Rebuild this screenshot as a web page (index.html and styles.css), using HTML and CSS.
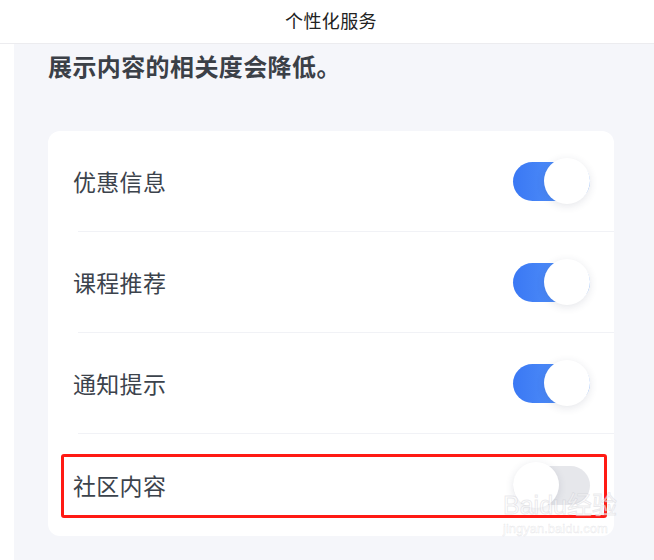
FILE: index.html
```html
<!DOCTYPE html>
<html lang="zh-CN">
<head>
    <meta charset="UTF-8">
    <meta name="viewport" content="width=device-width, initial-scale=1.0">
    <title>个性化服务</title>
    <link rel="stylesheet" href="styles.css">
</head>
<body>

<div class="header">个性化服务</div>

<div class="main">
    <h1 class="notice">展示内容的相关度会降低。</h1>

    <div class="card">
        <div class="row">
            <span class="label">优惠信息</span>
            <span class="switch on"><span class="knob"></span></span>
        </div>
        <div class="divider"></div>
        <div class="row">
            <span class="label">课程推荐</span>
            <span class="switch on"><span class="knob"></span></span>
        </div>
        <div class="divider"></div>
        <div class="row">
            <span class="label">通知提示</span>
            <span class="switch on"><span class="knob"></span></span>
        </div>
        <div class="divider"></div>
        <div class="row last">
            <span class="label">社区内容</span>
            <span class="switch"><span class="knob"></span></span>
            <span class="mark"></span>
        </div>
    </div>
</div>

<div class="watermark">Baidu经验<small>jingyan.baidu.com</small></div>

</body>
</html>
```

FILE: styles.css
```css
body {
    margin: 0;
    background: #fff;
    font-family: "Noto Sans CJK SC", "Noto Sans", sans-serif;
    height: 560px;
    overflow: hidden;
    position: relative;
}
.header {
    height: 43px;
    line-height: 41px;
    text-align: center;
    font-size: 18px;
    letter-spacing: 0.4px;
    color: #222;
    border-bottom: 1px solid #ececef;
    padding-left: 8px;
}
.main {
    margin-left: 14px;
    background: #f5f6fa;
    padding: 5px 40px 0 34px;
    height: 516px;
    box-sizing: border-box;
}
.notice {
    margin: 0;
    font-size: 24px;
    line-height: 34px;
    letter-spacing: 0.4px;
    font-weight: bold;
    color: #3b4047;
}
.card {
    margin-top: 48px;
    background: #fff;
    border-radius: 12px;
}
.row {
    height: 100px;
    display: flex;
    align-items: center;
    justify-content: space-between;
    padding: 0 24px 0 25px;
    position: relative;
}
.row.last {
    height: 102px;
}
.label {
    font-size: 23px;
    color: #3c434c;
    letter-spacing: 0.3px;
}
.divider {
    height: 1px;
    margin-left: 30px;
    background: #f1f2f6;
}
.switch {
    width: 77px;
    height: 39px;
    border-radius: 20px;
    background: #e6e7eb;
    display: flex;
    align-items: center;
    justify-content: flex-start;
}
.switch.on {
    background: linear-gradient(90deg, #3a78f4, #5c9bfa);
    justify-content: flex-end;
}
.knob {
    width: 46px;
    height: 46px;
    border-radius: 50%;
    background: #fff;
    box-shadow: 0 2px 8px rgba(40, 50, 80, 0.12);
}
.mark {
    position: absolute;
    left: 13px;
    right: 7px;
    top: 20px;
    bottom: 18px;
    border: 3px solid #ff1a14;
    border-radius: 3px;
}
.watermark {
    position: absolute;
    left: 503px;
    top: 492px;
    font-family: "Liberation Sans", sans-serif;
    font-size: 25px;
    color: rgba(255, 255, 255, 0.6);
    -webkit-text-stroke: 1px rgba(180, 180, 190, 0.28);
    line-height: 26px;
}
.watermark small {
    display: block;
    font-size: 13px;
    line-height: 22px;
    -webkit-text-stroke: 0.5px rgba(180, 180, 190, 0.3);
}
```
